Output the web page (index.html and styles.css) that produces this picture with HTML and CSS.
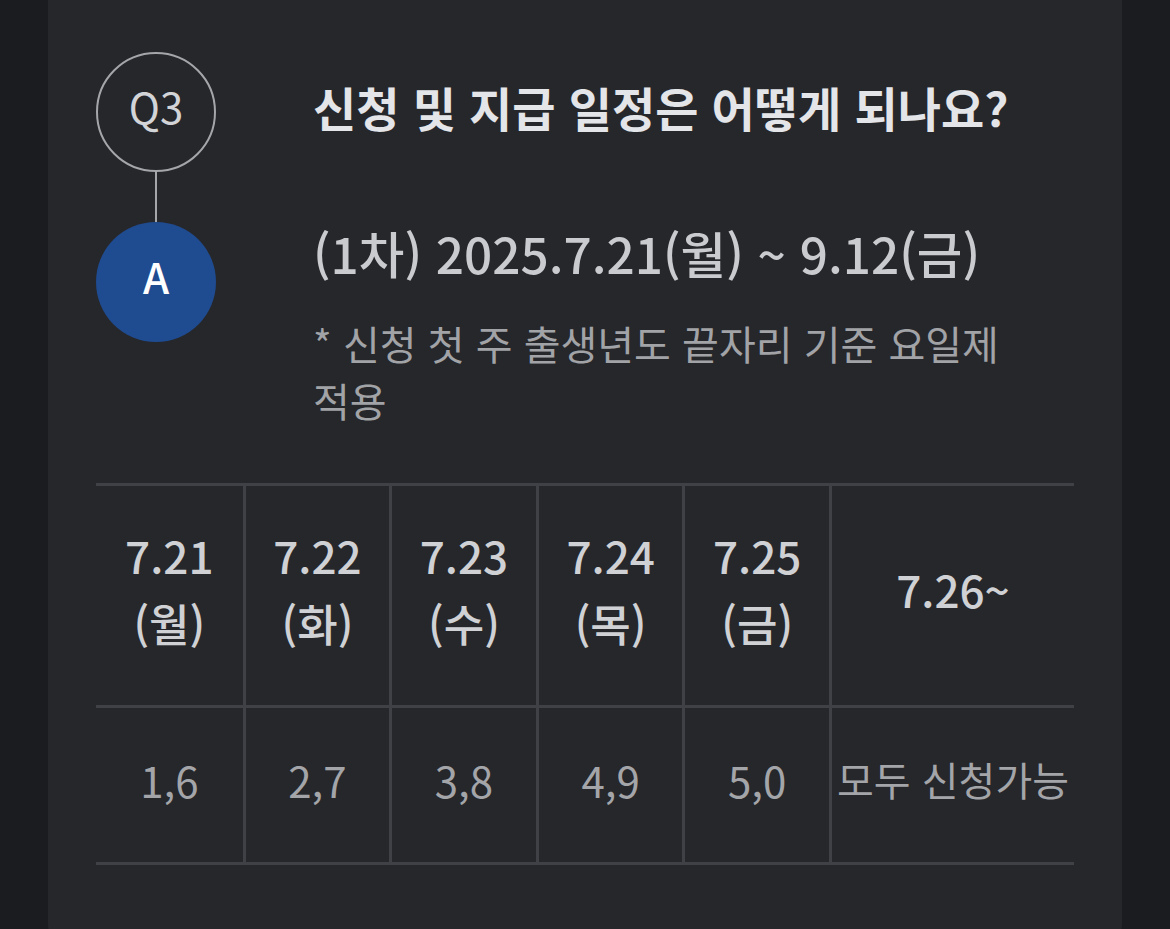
FILE: index.html
```html
<!DOCTYPE html>
<html lang="ko">
<head>
<meta charset="utf-8">
<link rel="stylesheet" href="styles.css">
</head>
<body>
<div class="page">
  <section class="card">
    <div class="qa">
      <div class="marks">
        <div class="badge badge-q">Q3</div>
        <div class="connector"></div>
        <div class="badge badge-a">A</div>
      </div>
      <div class="texts">
        <h2 class="question">신청 및 지급 일정은 어떻게 되나요?</h2>
        <p class="answer">(1차) 2025.7.21(월) ~ 9.12(금)</p>
        <p class="note">* 신청 첫 주 출생년도 끝자리 기준 요일제 적용</p>
      </div>
    </div>
    <div class="schedule">
      <div class="row head">
        <div class="cell">7.21<br>(월)</div>
        <div class="cell">7.22<br>(화)</div>
        <div class="cell">7.23<br>(수)</div>
        <div class="cell">7.24<br>(목)</div>
        <div class="cell">7.25<br>(금)</div>
        <div class="cell">7.26~</div>
      </div>
      <div class="row body">
        <div class="cell">1,6</div>
        <div class="cell">2,7</div>
        <div class="cell">3,8</div>
        <div class="cell">4,9</div>
        <div class="cell">5,0</div>
        <div class="cell cell-text">모두 신청가능</div>
      </div>
    </div>
  </section>
</div>
</body>
</html>
```

FILE: styles.css
```css
* { box-sizing: border-box; }
html, body {
  margin: 0;
  padding: 0;
  height: 100%;
  overflow: hidden;
  background: #1b1c1f;
  font-family: "Noto Sans CJK KR", "Noto Sans", sans-serif;
}
.page {
  padding: 0 48px;
}
.card {
  background: #26272b;
  border-radius: 0 0 24px 24px;
  padding: 52px 48px 72px;
  height: 948px;
}
.qa {
  display: grid;
  grid-template-columns: 120px 1fr;
  column-gap: 97px;
}
.marks {
  display: flex;
  flex-direction: column;
  align-items: center;
}
.badge {
  width: 120px;
  height: 120px;
  border-radius: 50%;
  display: flex;
  align-items: center;
  justify-content: center;
  font-size: 42px;
  padding-bottom: 14px;
}
.badge-q {
  border: 2px solid #a4a6aa;
  color: #d2d4d7;
  font-weight: 400;
}
.connector {
  width: 2px;
  height: 50px;
  background: #a4a6aa;
}
.badge-a {
  background: #1f4b91;
  color: #ffffff;
  font-weight: 500;
}
.texts {
  display: flex;
  flex-direction: column;
}
.question {
  margin: 0;
  height: 118px;
  padding-bottom: 10px;
  display: flex;
  align-items: center;
  font-size: 47px;
  font-weight: 700;
  color: #e4e5e8;
  white-space: nowrap;
}
.answer {
  margin: 53px 0 0;
  font-size: 49.5px;
  font-weight: 500;
  line-height: 60px;
  color: #c9cbcf;
  white-space: nowrap;
}
.note {
  margin: 32px 0 0;
  max-width: 720px;
  font-size: 40px;
  font-weight: 400;
  line-height: 57px;
  color: #a1a3a7;
  word-break: keep-all;
}
.schedule {
  margin-top: 54px;
  border-top: 3px solid #3f4146;
}
.row {
  display: grid;
  grid-template-columns: repeat(5, 1fr) 245px;
  border-bottom: 3px solid #3f4146;
}
.cell {
  display: flex;
  align-items: center;
  justify-content: center;
  text-align: center;
  white-space: nowrap;
}
.cell + .cell {
  border-left: 3px solid #3f4146;
}
.head .cell {
  height: 219px;
  padding-bottom: 14px;
  font-size: 44px;
  font-weight: 500;
  line-height: 68px;
  color: #cfd1d4;
}
.body .cell {
  height: 154px;
  padding-bottom: 12px;
  font-size: 42px;
  font-weight: 400;
  color: #a3a5a9;
}
.body .cell-text {
  font-size: 40px;
}
```
